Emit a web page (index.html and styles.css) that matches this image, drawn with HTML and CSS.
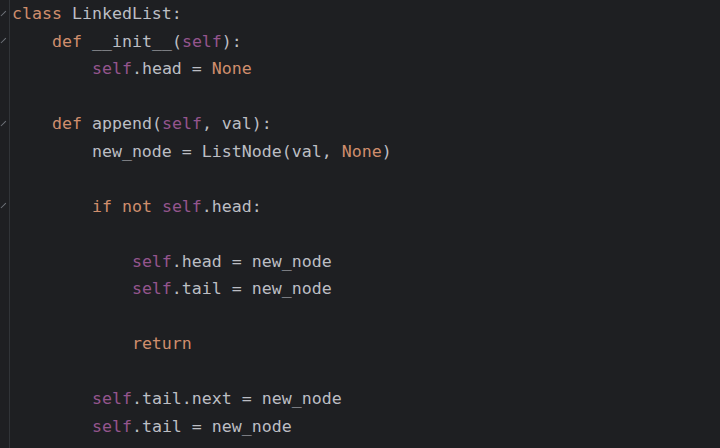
FILE: index.html
```html
<!DOCTYPE html>
<html>
<head>
<meta charset="utf-8">
<link rel="stylesheet" href="styles.css">
</head>
<body>
<div class="editor">
  <div class="gutter">
    <div class="gl"><span class="fold"></span></div>
    <div class="gl"><span class="fold"></span></div>
    <div class="gl"></div>
    <div class="gl"></div>
    <div class="gl"><span class="fold"></span></div>
    <div class="gl"></div>
    <div class="gl"></div>
    <div class="gl"><span class="fold"></span></div>
    <div class="gl"></div>
    <div class="gl"></div>
    <div class="gl"></div>
    <div class="gl"></div>
    <div class="gl"></div>
    <div class="gl"></div>
    <div class="gl"></div>
    <div class="gl"></div>
  </div>
  <pre class="code"><div class="ln"><span class="kw">class</span> LinkedList:</div><div class="ln">    <span class="kw">def</span> <span class="fn">__init__</span>(<span class="sf">self</span>):</div><div class="ln">        <span class="sf">self</span>.head = <span class="kw">None</span></div><div class="ln"> </div><div class="ln">    <span class="kw">def</span> <span class="fn">append</span>(<span class="sf">self</span>, val):</div><div class="ln">        new_node = ListNode(val, <span class="kw">None</span>)</div><div class="ln"> </div><div class="ln">        <span class="kw">if not</span> <span class="sf">self</span>.head:</div><div class="ln"> </div><div class="ln">            <span class="sf">self</span>.head = new_node</div><div class="ln">            <span class="sf">self</span>.tail = new_node</div><div class="ln"> </div><div class="ln">            <span class="kw">return</span></div><div class="ln"> </div><div class="ln">        <span class="sf">self</span>.tail.next = new_node</div><div class="ln">        <span class="sf">self</span>.tail = new_node</div></pre>
</div>
</body>
</html>
```
FILE: styles.css
```css
html, body {
  margin: 0;
  padding: 0;
  background: #1e1f22;
}
.editor {
  display: flex;
  width: 720px;
  height: 448px;
  overflow: hidden;
  background: #1e1f22;
}
.gutter {
  width: 9px;
  flex: none;
  border-right: 1px solid #313438;
  display: flex;
  flex-direction: column;
}
.gl {
  height: 27.53px;
  flex: none;
  position: relative;
}
.fold {
  position: absolute;
  left: 0px;
  top: 12.5px;
  width: 7px;
  height: 1.3px;
  background: #6f737a;
  transform: rotate(-45deg);
  transform-origin: center;
}
.code {
  margin: 0 0 0 2px;
  font-family: "DejaVu Sans Mono", "Liberation Mono", monospace;
  font-size: 16.6px;
  line-height: 27.53px;
  color: #bcbec4;
}
.ln {
  height: 27.53px;
  white-space: pre;
}
.kw { color: #cf8e6d; }
.sf { color: #94558d; }
.fn { color: #bcbec4; }
```
